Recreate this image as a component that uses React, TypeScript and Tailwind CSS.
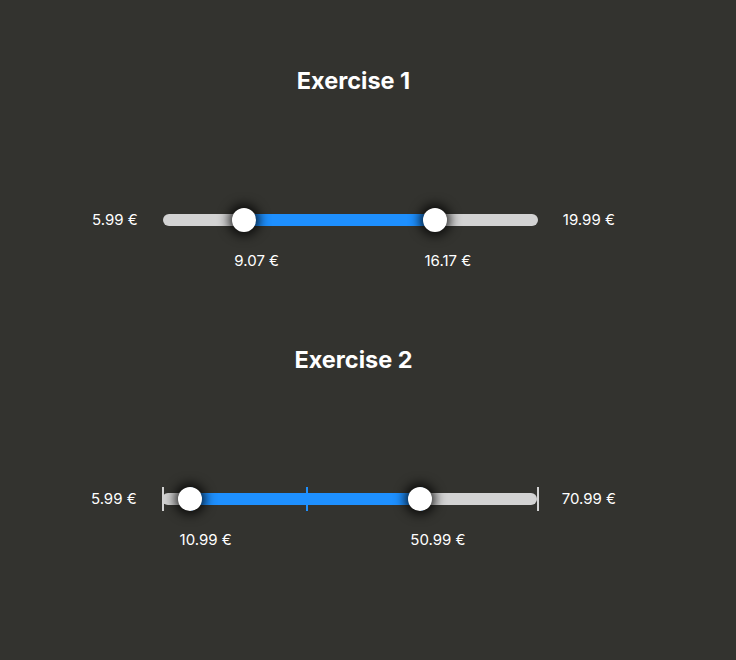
import React from "react";

type SliderProps = {
  min: number;
  max: number;
  low: number;
  high: number;
  ticks?: number[];
};

const fmt = (v: number) => `${v.toFixed(2)} €`;

function RangeRow({ min, max, low, high, ticks }: SliderProps) {
  const pct = (v: number) => ((v - min) / (max - min)) * 100;
  const lp = pct(low);
  const hp = pct(high);
  return (
    <div className="flex flex-col items-center">
      <div className="flex items-center gap-[25px]">
        <span className="text-[15px] leading-[20px] text-white">{fmt(min)}</span>
        <div className="relative h-[24px] w-[375px]">
          <div className="absolute left-0 right-0 top-[6px] h-[12px] rounded-full bg-[#d3d3d3]" />
          <div
            className="absolute top-[6px] h-[12px] bg-[#1e90ff]"
            style={{ left: `${lp}%`, width: `${hp - lp}%` }}
          />
          {ticks?.map((t) => {
            const inside = t >= low && t <= high;
            return (
              <div
                key={t}
                className={
                  inside
                    ? "absolute top-0 h-[24px] w-[2px] -translate-x-1/2 bg-[#1e90ff]"
                    : "absolute top-0 h-[24px] w-[2px] -translate-x-1/2 bg-[#d3d3d3]"
                }
                style={{ left: `calc(${pct(t)}% + 1px)` }}
              />
            );
          })}
          {[lp, hp].map((p, i) => (
            <div
              key={i}
              className="absolute top-0 h-[24px] w-[24px] -translate-x-1/2 rounded-full bg-white shadow-[0_0_12px_3px_rgba(0,0,0,0.9)]"
              style={{ left: `calc(${p}% - 1px)` }}
            />
          ))}
        </div>
        <span className="text-[15px] leading-[20px] text-white">{fmt(max)}</span>
      </div>
      <div className="mt-[19px] flex gap-[25px]">
        <span className="invisible text-[15px] leading-[20px]">{fmt(min)}</span>
        <div className="relative h-[20px] w-[375px]">
          {[
            [lp, low],
            [hp, high],
          ].map(([p, v], i) => (
            <span
              key={i}
              className="absolute top-0 whitespace-nowrap text-[15px] leading-[20px] text-white"
              style={{ left: `calc(${p}% - 11px)` }}
            >
              {fmt(v)}
            </span>
          ))}
        </div>
        <span className="invisible text-[15px] leading-[20px]">{fmt(max)}</span>
      </div>
    </div>
  );
}

export default function App() {
  return (
    <div
      className="h-[660px] w-[736px] bg-[#33332f]"
      style={{ fontFamily: "Inter, 'Noto Sans', sans-serif" }}
    >
      <div className="flex w-[707px] flex-col items-center pt-[67px]">
        <h1 className="text-[23.5px] font-bold leading-[28px] text-white">Exercise 1</h1>
        <div className="mt-[113px]">
          <RangeRow min={5.99} max={19.99} low={9.07} high={16.17} />
        </div>
        <h1 className="mt-[75px] text-[23.5px] font-bold leading-[28px] text-white">Exercise 2</h1>
        <div className="mt-[113px]">
          <RangeRow
            min={5.99}
            max={70.99}
            low={10.99}
            high={50.99}
            ticks={[5.99, 10.99, 30.99, 50.99, 70.99]}
          />
        </div>
      </div>
    </div>
  );
}
